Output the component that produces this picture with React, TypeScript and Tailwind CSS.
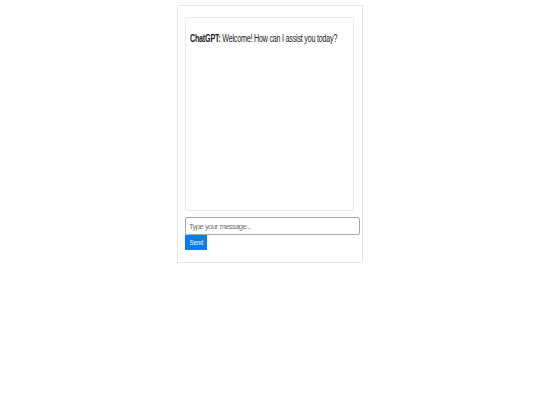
import React, { useState } from 'react';

const messages = [{ sender: 'ChatGPT', text: 'Welcome! How can I assist you today?' }];

export default function App() {
    const [value, setValue] = useState('');

    return (
        <div className="min-h-screen w-full bg-white flex justify-center pt-[5px] font-['Liberation_Sans',Arial,sans-serif] text-[#222]">
            <div className="w-[186px] h-[258px] border border-[#e4e4e4] rounded-[1px] pt-[11px] px-[7px] flex flex-col">
                {/* Chat log */}
                <div className="w-[169px] h-[194px] border border-[#ececec] rounded-[2px] px-[4px] pt-[15px]">
                    {messages.map((m, i) => (
                        <p key={i} className="text-[10px] leading-[12px] tracking-[-0.3px] whitespace-nowrap origin-left scale-x-[0.715]">
                            <span className="font-bold">{m.sender}:</span> {m.text}
                        </p>
                    ))}
                </div>

                {/* Input + send */}
                <input
                    value={value}
                    onChange={(e) => setValue(e.target.value)}
                    placeholder="Type your message..."
                    className="mt-[6px] w-[175px] h-[18px] border border-[#a8a8a8] rounded-[2px] px-[3px] text-[7.5px] tracking-[-0.55px] [word-spacing:0.5px] placeholder:text-[#707070] outline-none"
                />
                <button className="w-[22px] h-[15px] bg-[#0a7bf5] text-white text-[8px] leading-[15px] flex justify-center">
                    <span className="inline-block scale-x-[0.74]">Send</span>
                </button>
            </div>
        </div>
    );
}
